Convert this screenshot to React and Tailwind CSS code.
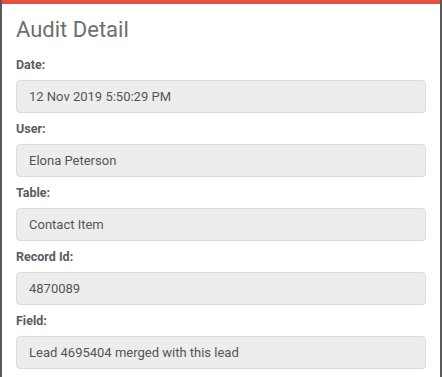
import React from 'react';

const fields = [
    { label: 'Date:', value: '12 Nov 2019 5:50:29 PM' },
    { label: 'User:', value: 'Elona Peterson' },
    { label: 'Table:', value: 'Contact Item' },
    { label: 'Record Id:', value: '4870089' },
    { label: 'Field:', value: 'Lead 4695404 merged with this lead' },
];

const App = () => {
    return (
        <div className="h-[377px] w-[442px] overflow-hidden bg-[#5a5a5a] px-[2px]" style={{ fontFamily: 'Roboto, "Liberation Sans", sans-serif' }}>
            <div className="h-full bg-white border-t-4 border-[#e8503f]">
                <div className="px-[14px] pt-[12px]">
                    <h2 className="text-[22px] leading-[28px] text-[#6e6e6e] font-normal">Audit Detail</h2>
                    <div className="mt-[13px] flex flex-col">
                        {fields.map((f) => (
                            <div key={f.label} className="flex flex-col">
                                <label className="text-[12.5px] leading-[16px] font-bold text-[#5c5c5c]">{f.label}</label>
                                <div className="mt-[7px] mb-[8px] h-[33px] w-[410px] flex items-center rounded-[4px] border border-[#dcdcdc] bg-[#ededed] px-[12px] text-[13px] text-[#555]">
                                    {f.value}
                                </div>
                            </div>
                        ))}
                    </div>
                </div>
            </div>
        </div>
    );
};

export default App;
